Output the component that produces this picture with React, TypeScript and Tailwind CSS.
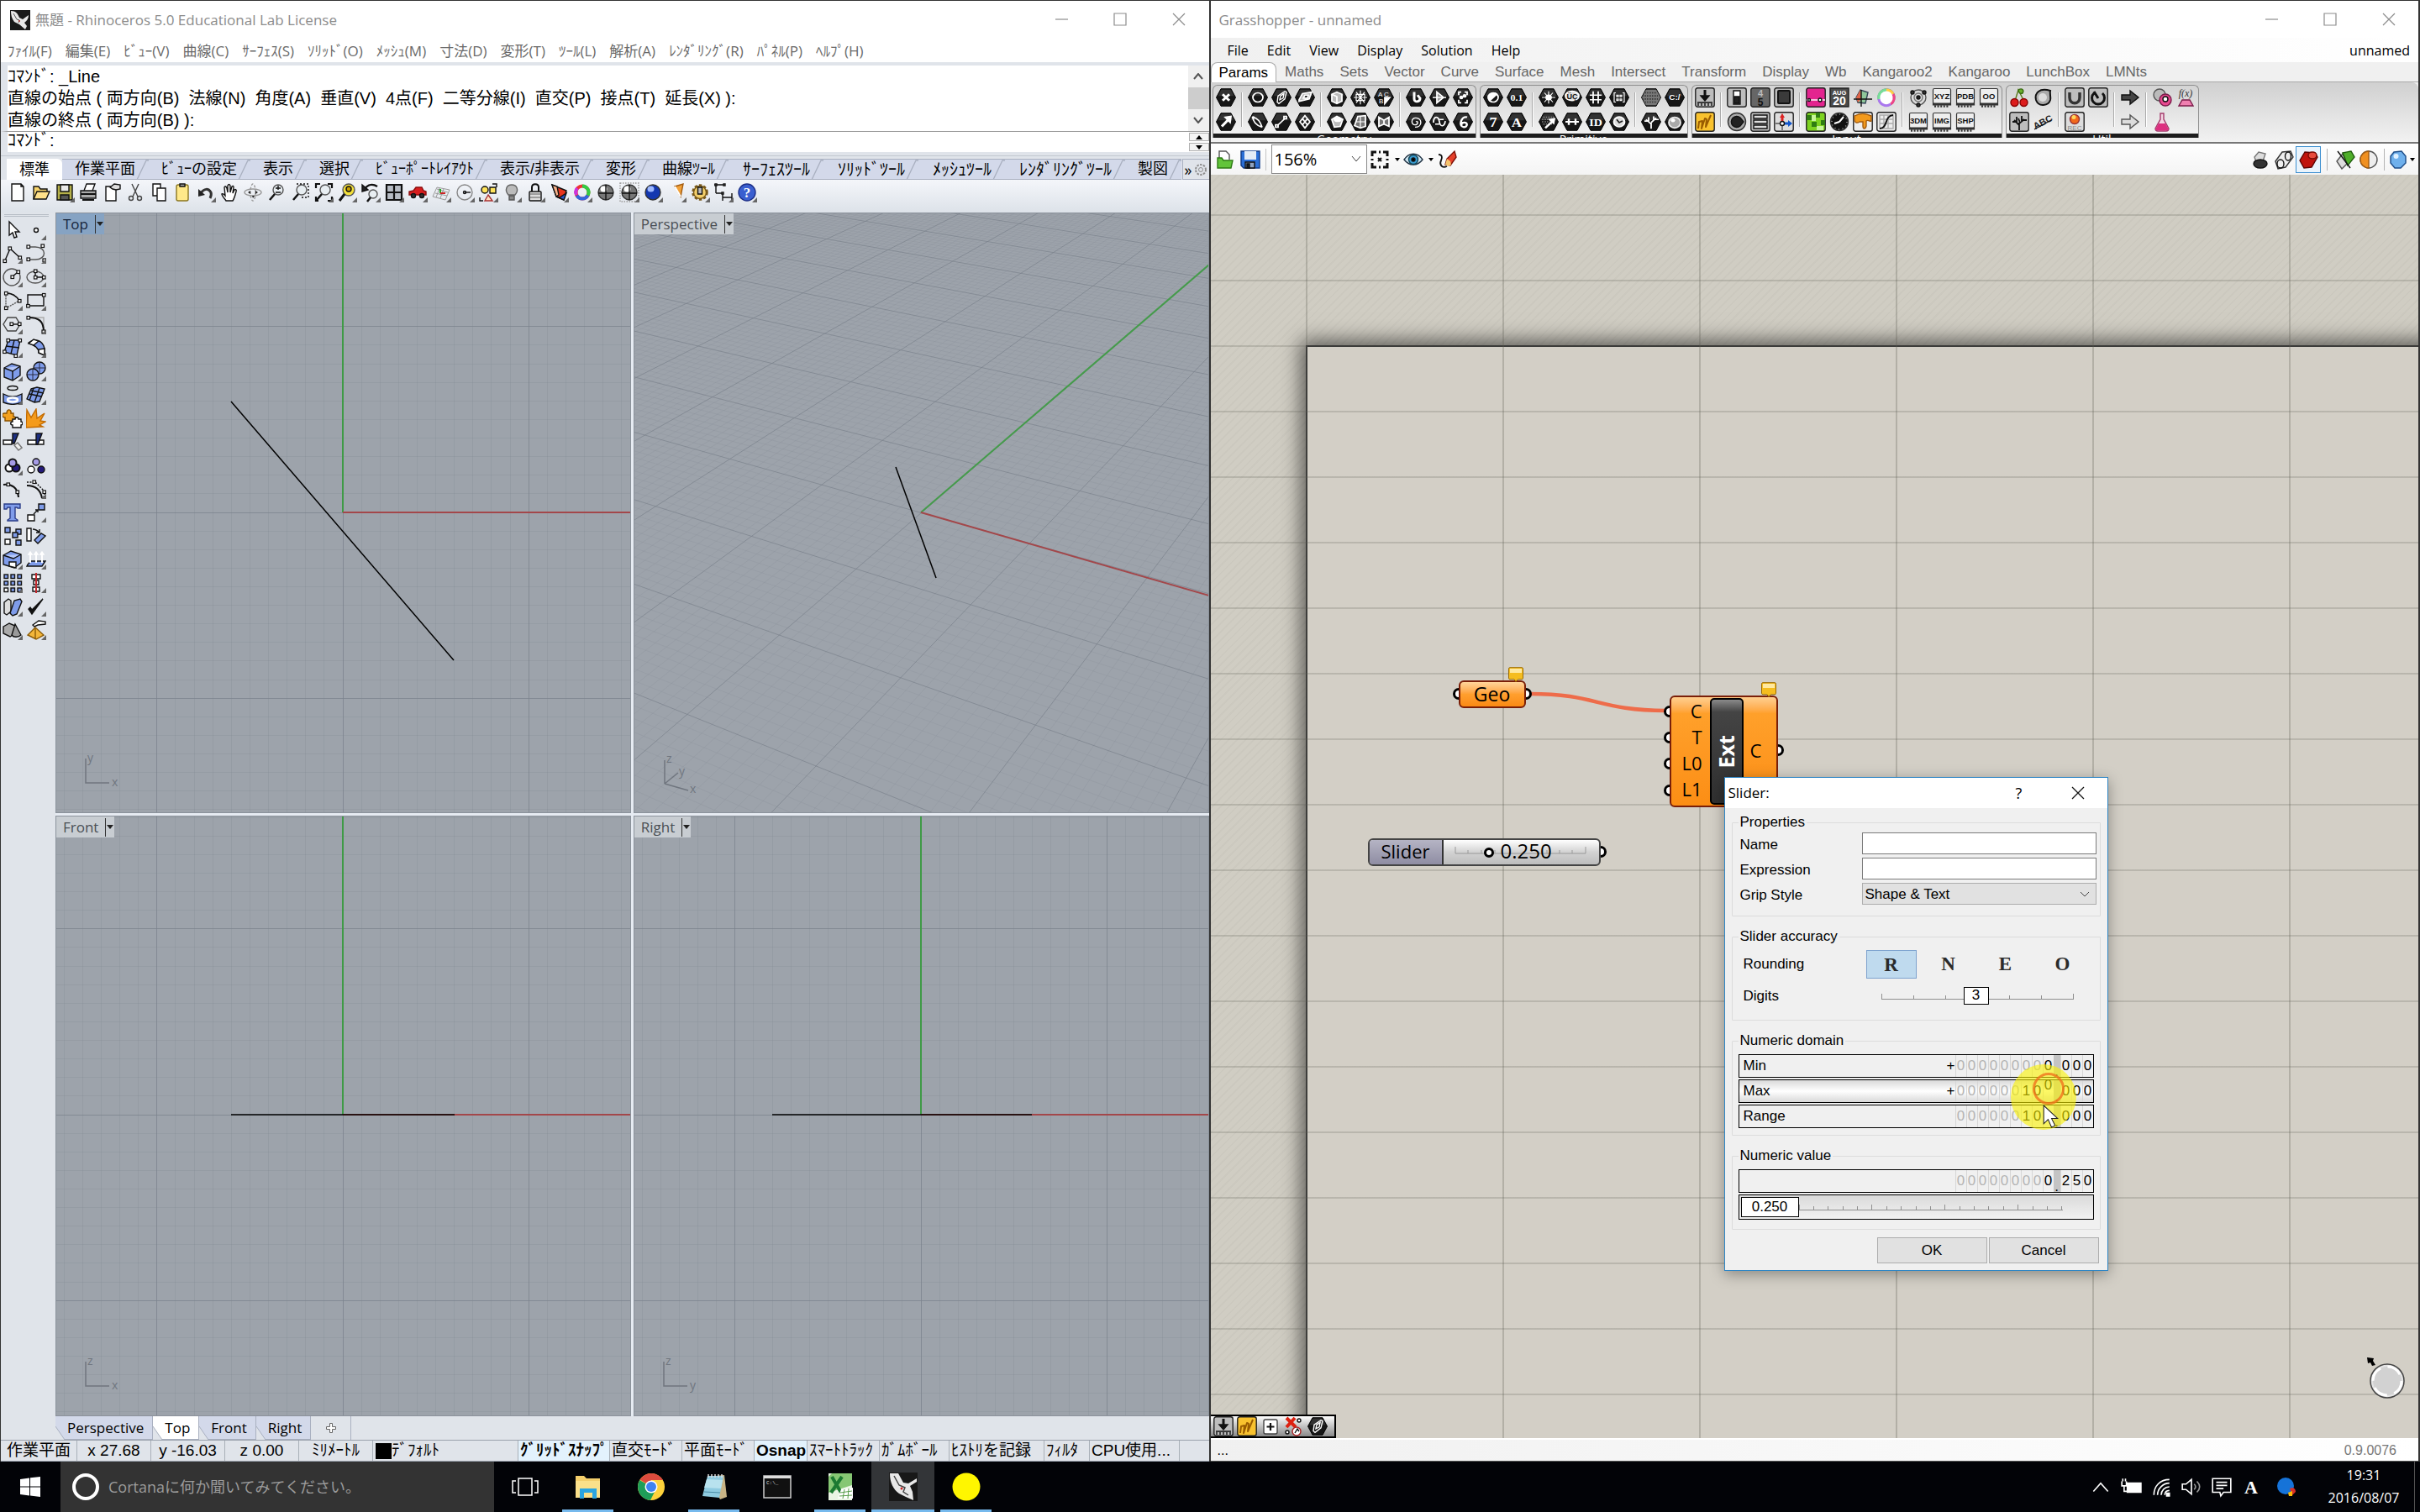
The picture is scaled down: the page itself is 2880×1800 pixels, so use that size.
import React from "react";

type Kids = { children?: React.ReactNode };

const UI = "font-['Open_Sans','Noto_Sans_CJK_JP',sans-serif]";
const GOTHIC = "font-['Liberation_Sans','Noto_Sans_CJK_JP',sans-serif]";

/* ---------- icon helpers ---------- */

function Ico({ children }: Kids) {
  return (
    <svg viewBox="0 0 24 24" className="h-6 w-6 shrink-0" fill="none" stroke="#111" strokeWidth="1.4">
      {children}
    </svg>
  );
}

function Hex({ children }: Kids) {
  return (
    <svg viewBox="0 0 24 24" className="h-[22px] w-6 shrink-0" preserveAspectRatio="none" fill="none" stroke="#fff" strokeWidth="1.8">
      <path d="M6 .8h12l5.500 11.200L18 23.200H6L.5 12z" fill="#161616" stroke="#000" strokeWidth="1" />
      <path d="M6.500 1.800h11l4 8.200H2.500z" fill="#4a4a4a" stroke="none" opacity=".55" />
      {children}
    </svg>
  );
}

function Tile({ children, fill = "#bdbdbd" }: Kids & { fill?: string }) {
  return (
    <svg viewBox="0 0 24 24" className="h-6 w-6 shrink-0" fill="none" stroke="#111" strokeWidth="1.4">
      <rect x=".8" y=".8" width="22.400" height="22.400" rx="2.500" fill={fill} stroke="#222" />
      {children}
    </svg>
  );
}

function Chip({ label }: { label: string }) {
  return (
    <svg viewBox="0 0 24 24" className="h-6 w-6 shrink-0" fill="none" stroke="#333" strokeWidth="1.2">
      <rect x="1.500" y="1.500" width="21" height="18" rx="1.500" fill="#eee" />
      <path d="M1.500 19h21v2h-21z" fill="#333" />
      <path d="M3 22.500h18" stroke="#333" strokeWidth="2.500" strokeDasharray="2 1.600" />
      <text x="12" y="14" textAnchor="middle" fontSize="9.500" fontFamily="Liberation Sans" fontWeight="700" fill="#111" stroke="none">{label}</text>
    </svg>
  );
}

function HexText({ t, size = 13, serif = false }: { t: string; size?: number; serif?: boolean }) {
  return (
    <Hex>
      <text x="12" y={12 + size * 0.37} textAnchor="middle" fontSize={size} fontWeight="700" fill="#fff" stroke="none" fontFamily={serif ? "Liberation Serif" : "Liberation Sans"}>{t}</text>
    </Hex>
  );
}

const corner = <path d="M24 18v6h-6z" fill="#666" stroke="none" />;
const BLUE = "#7f9cea";

/* ---------- Rhino main toolbar ---------- */

const magnifier = (
  <>
    <circle cx="14" cy="9" r="6" fill="#e8eef2" stroke="#555" />
    <path d="M10 14 4 21" strokeWidth="2.500" />
  </>
);

const ball = (a: string, b: string) => (
  <>
    <circle cx="12" cy="12" r="9" fill={a} stroke="#333" />
    <ellipse cx="9.500" cy="8" rx="4" ry="3.500" fill={b} stroke="none" />
  </>
);

const mainIcons: [string, React.ReactNode, boolean][] = [
  ["New", <path d="M5 2h11l3 3v17H5zM16 2v3h3" fill="#fff" />, false],
  ["Open", <><path d="M3 20V5h6l2 3h8v3" fill="#f6d36b" /><path d="m3 20 4-9h15l-4 9z" fill="#ffe08a" /></>, false],
  ["Save", <><path d="M3 3h18v18H3z" fill="#b5b04a" /><path d="M7 3h10v8H7z" fill="#e9e9e9" /><path d="M7 15h10v6H7z" fill="#555" /></>, true],
  ["Print", <><path d="m7 10 3-8h10l-3 8" fill="#fff" /><path d="M3 10h18v9H3z" fill="#aaa" /><path d="M3 14h18M5 21h14" strokeWidth="2" /></>, false],
  ["Properties", <><path d="M5 5h12v17H5z" fill="#fff" /><path d="m10 6 5-4 7 1v5l-5 1-4-1z" fill="#ddd" /></>, false],
  ["Cut", <><path d="M8 2 15 17M16 2 9 17" stroke="#444" /><circle cx="7" cy="19" r="2.500" stroke="#444" /><circle cx="17" cy="19" r="2.500" stroke="#444" /></>, false],
  ["Copy", <><path d="M5 2h9v14H5z" fill="#fff" /><path d="M10 7h10v15H10z" fill="#fff" /></>, false],
  ["Paste", <><rect x="5" y="3" width="14" height="19" rx="2" fill="#ffe98a" stroke="#8a7620" /><path d="M9 2h6v3H9z" fill="#aaa" /></>, false],
  ["Undo", <><path d="M6 13c4-6 9-6 12-1 1 3 0 5-1 7" stroke="#333" strokeWidth="3" /><path d="M3 8v9l8-2z" fill="#222" stroke="none" /></>, true],
  ["Pan", <path d="M8 22c-2-3-5-6-5-8 2-1 3 1 4 2L6 6c1-2 2-1 3 1l1 5V4c1-2 2-2 3 0v8l2-7c1-1 2-1 2 1l-1 7 2-4c1-1 3 0 2 2-1 4-2 8-4 11z" fill="#fff" />, false],
  ["Rotate view", <><ellipse cx="12" cy="12" rx="10" ry="4" stroke="#999" /><ellipse cx="12" cy="12" rx="3" ry="10" stroke="#999" strokeDasharray="3 2" /><path d="m9 10-3 2 3 2zM15 10l3 2-3 2zM11 16l1 3 2-3z" fill="#222" stroke="none" /></>, false],
  ["Zoom dynamic", <>{magnifier}<path d="M11 7h6M14 4v5M11 12h6" /></>, false],
  ["Zoom window", <>{magnifier}<path d="M8 2h14v16h-8" strokeDasharray="2 2" /></>, false],
  ["Zoom extents", <>{magnifier}<path d="M3 7V2h5M17 2h5v5M22 17v5h-5M3 17v5h3" strokeWidth="2.200" /></>, true],
  ["Zoom selected", <><circle cx="14" cy="9" r="7" fill="#f3e03a" stroke="#555" /><circle cx="14" cy="8" r="3" fill="#c9a000" /><path d="M9 14 3 22" strokeWidth="3" /></>, true],
  ["Undo view", <><circle cx="15" cy="14" r="5" fill="#e8eef2" stroke="#555" /><path d="m12 18-4 5" strokeWidth="2.500" /><path d="M5 8c4-6 10-6 15-3" strokeWidth="2.500" /><path d="M2 3v8l7-2z" fill="#222" /></>, true],
  ["Four views", <><path d="M3 3h18v18H3z" fill="#b7bcc4" strokeWidth="2.200" /><path d="M12 3v18M3 12h18" strokeWidth="2.200" /></>, true],
  ["Named view", <><path d="M2 15v-4l5-1 3-4h7l2 4 3 1v4z" fill="#d81e1e" stroke="#8c0d0d" /><circle cx="7" cy="16" r="2.500" fill="#333" /><circle cx="17" cy="16" r="2.500" fill="#333" /></>, true],
  ["Construction plane", <><path d="m2 17 5-11 15 3-5 12zM5 13l14 3M7 8l13 4M10 7 6 18M15 8l-4 11" stroke="#999" strokeWidth="1" /><path d="M11 13V8" stroke="#2a2" strokeWidth="2" /><path d="M11 13h6" stroke="#c22" strokeWidth="2" /></>, true],
  ["Set view", <><circle cx="12" cy="12" r="9" stroke="#888" /><path d="M12 12h7" /><circle cx="12" cy="12" r="1.500" /></>, true],
  ["Select", <><circle cx="8" cy="9" r="4" fill="#ffe45c" /><path d="M14 6h7v7h-7z" fill="#ffe45c" /><path d="m12 15 5 7H8z" fill="#ffe0c0" stroke="#a33" /><path d="M17 2h5v4M2 18v4h4" /></>, true],
  ["Hide", <><path d="M8 15c-5-6-2-12 4-12s9 6 4 12z" fill="#bbb" stroke="#666" /><path d="M9 16h6v5H9z" fill="#888" stroke="#555" /></>, true],
  ["Lock", <><path d="M8 11V6c0-5 8-5 8 0v5" strokeWidth="2" /><rect x="5" y="11" width="14" height="11" rx="1" fill="#ddd" /><path d="M6 14h12M6 18h12" stroke="#888" /></>, true],
  ["Layers", <><path d="m4 3 17 7-3 11-9-4z" fill="#e8341c" /><path d="m4 3 5 14 3-2-2-10z" fill="#f7b28a" /><path d="m9 17 9 4 3-8-8 5z" fill="#2b57c8" /></>, true],
  ["Colour", <><circle cx="12" cy="12" r="7.500" stroke="#e33" strokeWidth="4" /><path d="M12 4.500a7.500 7.500 0 0 1 6.500 11.300" stroke="#3c4" strokeWidth="4" /><path d="M18.500 15.800a7.500 7.500 0 0 1-13 0" stroke="#36d" strokeWidth="4" /><path d="M5 15a7.500 7.500 0 0 1 1-8" stroke="#c3d" strokeWidth="4" /></>, true],
  ["Shade", <>{ball("#777", "#fff")}<path d="M12 3v18M3 13h18" /></>, false],
  ["Wireframe", <><path d="M1 1h22v22H1z" stroke="#999" strokeDasharray="1.500 1.500" />{ball("#777", "#fff")}<path d="M12 3v18M3 13h18" /></>, true],
  ["Render", ball("#1438b0", "#9db8ff"), true],
  ["Spotlight", <><path d="m10 5 10-3-3 15z" fill="#f2a23a" stroke="#a35c10" /><path d="m10 5 7 12" stroke="#fff" strokeWidth="2" /></>, true],
  ["Options", <><circle cx="12" cy="12" r="8" fill="#f3cf6a" stroke="#77581a" strokeWidth="3.500" strokeDasharray="3.200 2" /><circle cx="12" cy="12" r="7.500" fill="#f3cf6a" stroke="#77581a" /><path d="M9.500 6h5v8h-5z" fill="#bbb" /></>, true],
  ["Dimension", <><path d="M3 2v11M1 3h12M3 13h8v9M11 18h11M22 13v9" /><path d="M2 2h2v2H2zM12 2h2v2h-2zM10 12h2v2h-2z" fill="#fff" /></>, true],
  ["Help", <><circle cx="12" cy="12" r="10" fill="#3a5fd0" stroke="#1c2f88" /><text x="12" y="18" textAnchor="middle" fontSize="17" fontWeight="700" fontFamily="Liberation Serif" fill="#fff" stroke="none">?</text></>, true],
];

/* ---------- Rhino side toolbar ---------- */

const sq = (x: number, y: number, f = "#fff") => <rect x={x} y={y} width="3.500" height="3.500" fill={f} strokeWidth="1.200" />;

const sideIcons: [string, React.ReactNode, boolean][] = [
  ["Select", <path d="M8 2v16l4-3 2 6 3-1-2-6h5z" fill="#fff" />, false],
  ["Point", <circle cx="12" cy="12" r="2.500" fill="#fff" />, true],
  ["Polyline", <><path d="m3 20 6-14 12 11" />{sq(7, 4)}{sq(1, 19)}{sq(19, 15)}</>, true],
  ["Curve", <><path d="M5 4h6c14 0 14 15 0 15H5" stroke="#555" />{sq(1, 2)}{sq(1, 17)}{sq(18, 1)}{sq(20, 18)}</>, true],
  ["Circle", <><circle cx="11" cy="12" r="10" stroke="#555" /><path d="m11 12 7-6" />{sq(10, 10)}{sq(17, 4)}</>, true],
  ["Ellipse", <><ellipse cx="11" cy="12" rx="10" ry="7" stroke="#555" /><path d="M11 5v7h10" />{sq(9.5, 3)}{sq(9.5, 10.5)}{sq(19.5, 10.5)}</>, true],
  ["Arc", <><path d="M4 3c8 0 13 4 16 9L4 21z" stroke="#555" strokeDasharray="2 1" /><path d="M4 3c8 0 13 4 16 9" />{sq(2.5, 1.5)}{sq(18.5, 10.5)}{sq(2.5, 19)}</>, true],
  ["Rectangle", <><path d="M2 5h19v13H2z" />{sq(0.7, 16.5)}{sq(19.5, 3.5)}</>, true],
  ["Polygon", <><path d="M6 4h10l5 8-5 8H6l-5-8z" stroke="#444" /><path d="M11 12h9" />{sq(9, 10)}{sq(18.5, 10)}</>, true],
  ["Fillet", <><path d="M3 4h18v17" stroke="#aaa" /><path d="M3 4c12 0 18 4 18 17" strokeWidth="2" />{sq(1, 2.5)}{sq(19, 19)}</>, true],
  ["Surface", <><path d="M7 3h14l-4 18-15-4z" fill={BLUE} /><path d="m4 10 16 2M14 3l-4 16" />{sq(5, 1.5)}{sq(19, 1.5)}{sq(0.7, 15)}{sq(14, 20)}</>, true],
  ["Sweep", <><path d="M3 6c7-6 17-3 19 7v8l-7-3c0-6-4-8-12-12z" fill={BLUE} /><path d="m3 7 6-5 6 2-6 5z" fill="#fff" /><path d="m15 14 7-1v8l-7-3z" fill="#fff" /></>, true],
  ["Box", <><path d="m2 8 9-5 10 3v11l-9 6-10-4z" fill={BLUE} /><path d="m2 8 10 4 9-6" fill="#b5c8fa" /><path d="M12 12v11" /></>, true],
  ["Boolean", <><circle cx="16" cy="8" r="7" fill={BLUE} /><circle cx="8" cy="16" r="7" fill={BLUE} /><path d="M9 8h14M1 16h14M8 9v14M16 1v14" stroke="#223" strokeWidth=".9" /></>, true],
  ["Project", <><ellipse cx="12" cy="4" rx="6" ry="2.500" /><path d="M1 11c7 4 15 4 22 0v10c-7 3-15 3-22 0z" fill={BLUE} /><ellipse cx="12" cy="18" rx="6" ry="2.500" stroke="#fff" strokeWidth="2.500" /></>, true],
  ["Mesh", <><path d="m6 5 7-2 9 2-6 15-6 1-9-4z" fill={BLUE} /><path d="m4 11 14 3M9 4 4 19M16 4l-6 17M6 7l15 3" /></>, true],
  ["Join", <><path d="M2 6h3c0-6 6-5 5 0h3v4c5 0 4 5 0 5H3v-4c-4 0-4-5-1-5z" fill="#f3a120" stroke="#8a5200" /><path d="M12 13h3c0-3 4-3 4 0h3v3c3 0 2 4 0 4v3H12v-3c-3 0-3-4 0-4z" fill="#fff" /></>, false],
  ["Explode", <path d="m1 2 5 9 6-10 1 11 9-6-5 9 6 1-7 4 4 2-20 1z" fill="#f49b1c" stroke="#c26a00" />, false],
  ["Trim", <><path d="M1 10h10v5H1z" fill="#fff" /><path d="M12 2h7l-5 12h-2z" fill="#1d2f80" /><path d="m14 16 4-3 5 6-4 3z" fill="#eee" stroke="#777" /></>, false],
  ["Split", <><path d="M2 10h19v5H2z" fill="#fff" /><path d="M12 2h7l-5 13h-2z" fill="#1d2f80" /></>, false],
  ["Group", <><circle cx="8" cy="15" r="4.500" fill="#fff" strokeWidth="2" /><circle cx="16" cy="15" r="4.500" fill="#241a7a" strokeWidth="2" /><circle cx="12" cy="9" r="4.500" fill="#a59be6" strokeWidth="2" /></>, true],
  ["Ungroup", <><circle cx="6" cy="17" r="4" fill="#fff" /><circle cx="18" cy="17" r="4" fill="#241a7a" /><circle cx="12" cy="8" r="4" fill="#a59be6" /></>, false],
  ["Edit points", <><path d="M1 7c10-1 17 3 18 15" strokeWidth="2" />{sq(5, 5)}{sq(16, 14)}</>, false],
  ["Control points", <><path d="M1 8c10 0 16 4 18 15" strokeWidth="2" /><path d="M1 4h10l12 12-2 6" strokeDasharray="2 1.500" />{sq(8, 2)}{sq(20, 14)}</>, true],
  ["Text", <path d="M2 2h19v5h-3l-1-1h-2v13l3 2v1H6v-1l3-2V6H6L5 8H2z" fill={BLUE} stroke="#2a3c88" />, false],
  ["Move", <><path d="M2 15h8v7H2z" fill="#fff" /><path d="M15 2h7v7h-7z" fill={BLUE} /><path d="m9 14 5-5M11 9h3v3" /></>, true],
  ["Copy", <><path d="M3 2h6v6H3z" fill={BLUE} /><path d="M3 16h6v6H3z" fill="#fff" /><path d="M16 4h6v6h-6z" fill={BLUE} /><path d="M12 8h6v6h-6zM16 17h6v6h-6z" fill={BLUE} /></>, false],
  ["Rotate", <><path d="M1 3h5v15H1z" fill="#fff" /><path d="m10 17 8-8 5 3-9 9z" fill={BLUE} /><path d="M8 4c4 0 6 2 8 4M16 4v4h-4" /></>, false],
  ["Solid edit", <><path d="m1 7 9-5 12 4v10l-8 6-13-4z" fill={BLUE} /><path d="m1 7 12 4 9-5" fill="#b5c8fa" /><path d="M8 15h8v7l-8-2z" fill="#fff" /></>, true],
  ["Extrude", <><path d="m2 18 4-4h17l-4 6H1z" fill={BLUE} /><path d="M5 16V5M12 16V5M19 16V5" stroke="#fff" strokeWidth="2" /><path d="m3 6 2-3 2 3zM10 6l2-3 2 3zM17 6l2-3 2 3z" fill="#fff" stroke="#fff" /></>, true],
  ["Array", <>{[2, 10, 18].map((x) => [2, 10, 18].map((y) => <rect key={`${x}-${y}`} x={x} y={y} width="4.500" height="4.500" fill={x === 2 && y === 18 ? "#fff" : BLUE} />))}</>, true],
  ["Align", <><path d="M7 2h10v5H7zM9 9h6v5H9zM8 17h8v5H8z" fill="#fff" /><path d="M12 0v24" stroke="#c0282d" strokeWidth="2" /></>, true],
  ["Symmetry", <><path d="m2 7 5-4 3 2v13l-5 4-3-2z" fill="#ddd" /><path d="m9 20 5-15 7-2 2 3-6 15-5 2z" fill={BLUE} /></>, true],
  ["Check", <path d="m3 15 4 6L20 3 7 16l-2-3z" fill="#111" />, true],
  ["Solids", <><path d="m1 8 7-4 7 3v9l-6 4-8-4z" fill="#aaa" /><path d="m15 5 7 13c-3 3-9 3-11 0z" fill="#999" /></>, true],
  ["Render tools", <><path d="m11 9 10 9-9 5-10-5z" fill="#f3b63a" stroke="#8a5b08" /><path d="M11 9v14" stroke="#8a5b08" /><path d="m8 6 7-5 8 1v3l-9 1-4 2z" fill="#fff" /></>, true],
];

/* ---------- Grasshopper ribbon ---------- */

const downArrowTile = <Tile><path d="M12 3v9" strokeWidth="3" /><path d="m7 10 5 6 5-6z" fill="#111" /><path d="M3 18h18M4 19v3M8 19v3M12 19v3M16 19v3M20 19v3" /></Tile>;
const sketchTile = <Tile fill="#f9c22e"><path d="m4 20 1-8 4-1-1 9 4-12 2 1-1 9 6-14" stroke="#9a5c00" strokeWidth="2" strokeLinejoin="round" /></Tile>;
const eyeHex = <Hex><path d="m7 18 1-8 8-6 2 1-2 9-7 6zM10 15l1-5 4-3-1 6z" strokeWidth="1.400" /></Hex>;

const ribbon: { title: string; groups: React.ReactNode[][] }[] = [
  {
    title: "Geometry",
    groups: [
      [<Hex><path d="m8 8 8 8M16 8l-8 8" strokeWidth="3" /></Hex>, <Hex><path d="m7 18 8-9" strokeWidth="3" /><path d="m11 6 7-1-1 8z" fill="#fff" /></Hex>],
      [
        <Hex><circle cx="12" cy="12" r="6" /></Hex>,
        <Hex><path d="M6 6c5 1 9 6 11 13M6 6c0 5 4 11 11 13" /><circle cx="6.500" cy="6.500" r="1" /></Hex>,
        eyeHex,
        <Hex><path d="m6 18 12-12" /><path d="M5 16h3v3H5zM15 5h3v3h-3z" fill="#000" /></Hex>,
        <Hex><path d="m5 15 4-8 11-2-3 9-12 3z" fill="#bbb" /><path d="m10 13 2-4h4l-1 4z" fill="#222" /></Hex>,
        <Hex><path d="m12 4 6 8-6 8-6-8zM9 8l6 8M15 8l-6 8" /></Hex>,
      ],
      [
        <Hex><path d="m6 8 6-3 6 3v9l-6 3-6-3z" fill="#bbb" /><path d="m6 8 6 3v9" /></Hex>,
        <Hex><path d="m6 9 6-4 7 4-3 9-7 1z" fill="#bbb" /><ellipse cx="13" cy="9" rx="4" ry="2.500" fill="#fff" /></Hex>,
        <Hex><path d="M12 3v18M4 12h16M7 5l10 14M17 5 7 19M7 8h10v8H7z" strokeWidth="1.200" /></Hex>,
        <Hex><path d="m9 5 9-1v14l-6 2-7-3z" fill="#777" /><path d="M12 5v14M7 12h11" strokeWidth="1.200" /></Hex>,
        <Hex><text x="5" y="11" fontSize="8" fill="#fff" stroke="none" fontFamily="Liberation Sans">A C</text><text x="6" y="20" fontSize="8" fill="#fff" stroke="none" fontFamily="Liberation Sans">B</text><path d="M13 12h6l-6 8z" fill="#fff" /></Hex>,
        <Hex><path d="M6 6v12l6-3 6 3V6l-6 4zM12 10v5" fill="#777" /></Hex>,
      ],
      [
        <Hex><path d="M10 5v9c0 5 7 4 7-1l-3-4" strokeWidth="3" /></Hex>,
        <Hex><path d="M12 12c3-2 3 4-1 4-5 0-5-9 1-9 8 0 8 12-1 12" strokeWidth="1.400" /></Hex>,
        <Hex><path d="M4 12h16M9 5v14l8-7z" fill="#999" /></Hex>,
        <Hex><path d="M5 13c0-9 6-9 7-1 1 7 6 7 7-1M12 9h5M7 15h5" /></Hex>,
        <Hex><path d="M7 9V5h3M17 9V5h-3M7 15v4h3M17 15v4h-3" /><circle cx="10" cy="12" r="1.500" fill="#fff" /><circle cx="14" cy="10" r="1.500" fill="#fff" /></Hex>,
        <Hex><path d="M17 6c-7-2-11 12-4 13 5 0 5-7 0-6-2 0-3 2-3 4" strokeWidth="2.400" /></Hex>,
      ],
    ],
  },
  {
    title: "Primitive",
    groups: [
      [<Hex><circle cx="12" cy="12" r="6" /><path d="M7.800 16.200 16.200 7.800A6 6 0 0 0 7.800 16.200z" fill="#fff" /></Hex>, <HexText t="7" size={18} serif />, <HexText t="0.1" size={12} serif />, <HexText t="A" size={17} serif />],
      [
        <Hex><path d="M12 4v16M4 12h16M7 6l10 12M17 6 7 18" strokeWidth="1.200" /><circle cx="12" cy="12" r="3" fill="#fff" /></Hex>,
        <Hex><path d="M5 6h14M4 9h15M4 12h14M5 15h11" stroke="#888" strokeDasharray="1 1" /><path d="m8 20 9-9" strokeWidth="2.500" /><path d="m13 9 6-1-1 6z" fill="#fff" /></Hex>,
        <Hex><ellipse cx="12" cy="10" rx="8" ry="6" fill="#ddd" /><text x="12" y="14" textAnchor="middle" fontSize="9" fontWeight="700" fill="#111" stroke="none" fontFamily="Liberation Sans">ÜÇ</text></Hex>,
        <Hex><path d="M4 12h16M8 8v8M16 8v8" strokeWidth="2.400" /></Hex>,
        <Hex><path d="M9 4v16M15 4v16M5 9h14M5 15h14" /></Hex>,
        <HexText t="ID" size={14} serif />,
        <Hex><path d="M8 6H6v12h2M16 6h2v12h-2M9 9h2v2H9zM13 9h2v2h-2zM9 14h2v2H9zM13 14h2v2h-2z" strokeWidth="1.200" /></Hex>,
        <Hex><circle cx="12" cy="12" r="6.500" fill="#ddd" /><path d="m9 9 3 4 4-2" stroke="#222" /></Hex>,
      ],
      [
        <Hex><path d="M6 2h12l5 10-5 10H6L1 12z" fill="#777" stroke="none" /><path d="M5 6h14M3 10h18M3 14h18M5 18h14" stroke="#333" strokeDasharray="1 1" /></Hex>,
        <Hex><path d="M12 21v-8M12 15 6 9M12 13l6-6M9 12V6M15 10V5M8 11H4M16 9h5" /></Hex>,
        <HexText t="C:/" size={10} />,
        <Hex><circle cx="12" cy="13" r="7" fill="#aaa" stroke="#eee" /><circle cx="10" cy="10" r="2.500" fill="#fff" stroke="none" /></Hex>,
      ],
    ],
  },
  {
    title: "Input",
    groups: [
      [downArrowTile, sketchTile],
      [
        <Tile><path d="M8 4h8v16H8z" fill="#fff" /><path d="M9 11h6v8H9z" fill="#222" /></Tile>,
        <Ico><circle cx="12" cy="12" r="10.500" fill="#aaa" stroke="#333" /><path d="m20 12-4-5a6.500 6.500 0 1 0 0 10z" fill="#222" /></Ico>,
        <Tile fill="#666"><text x="12" y="11" textAnchor="middle" fontSize="11" fontWeight="700" fill="#bbb" stroke="none" fontFamily="Liberation Sans">4</text><text x="12" y="22" textAnchor="middle" fontSize="12" fontWeight="700" fill="#111" stroke="none" fontFamily="Liberation Sans">5</text></Tile>,
        <Tile><path d="M4 4h16v4H4zM4 10h16v4H4zM4 16h16v4H4z" fill="#ddd" /></Tile>,
        <Tile><rect x="5" y="4" width="14" height="15" rx="1" fill="#3a3a3a" strokeWidth="2" /></Tile>,
        <Tile fill="#ddd"><path d="M10 11V3M2 14h8v8" stroke="#555" /><path d="M10 12V6" stroke="#d22" strokeWidth="3" /><path d="m7 7 3-5 3 5z" fill="#d22" stroke="none" /><path d="M12 14h6" stroke="#15c" strokeWidth="3" /><path d="m17 10 5 4-5 4z" fill="#15c" stroke="none" /><circle cx="10" cy="14" r="2.500" fill="#fff" /></Tile>,
      ],
      [
        <Tile fill="#e3248f"><path d="M1 15h22" stroke="#fff" /><circle cx="4" cy="15" r="1.500" fill="#fff" /><circle cx="17" cy="15" r="2" fill="#fff" /></Tile>,
        <Tile fill="#7ed321"><path d="M1 4h6v6H1zM12 1h5v6h-5zM7 12h6v6H7zM18 10h5v6h-5z" fill="#2f7d12" stroke="none" /><path d="M7 4h5v7H7zM13 17h8v5h-8z" fill="#c7f59a" stroke="none" /></Tile>,
        <Ico><path d="M1 1h22v22H1z" fill="#4a4a4a" stroke="#222" /><text x="12" y="8.500" textAnchor="middle" fontSize="7.500" fontWeight="700" fill="#fff" stroke="none" fontFamily="Liberation Sans">AUG</text><text x="12" y="21" textAnchor="middle" fontSize="14" fontWeight="700" fill="#fff" stroke="none" fontFamily="Liberation Sans">20</text></Ico>,
        <Ico><circle cx="12" cy="12" r="10.500" fill="#111" stroke="#333" /><path d="M12 12 17 6M12 12l-6 2" stroke="#fff" strokeWidth="2" /><circle cx="12" cy="12" r="9" stroke="#aaa" strokeDasharray="1 3.700" /></Ico>,
        <Ico><path d="m4 12 5-9 9 3-3 13-9-1z" fill="#8fc79a" stroke="#345" /><path d="m9 3 1 11-4 4-2-6z" fill="#e0654a" stroke="none" /><path d="M1 14h22M10 3v20" /></Ico>,
        <Tile fill="#eee"><path d="M2 5c7-4 14-3 20 0v6c-3 1-4-2-6 0v6c-1 4-4 4-4 0v-5H8c-3 2-6 1-6-2z" fill="#f39a1c" stroke="#a35c10" /></Tile>,
        <Ico><circle cx="12" cy="12" r="10" fill="#fff" stroke="#888" /><path d="M12 3a9 9 0 0 1 8 5" stroke="#fc4" strokeWidth="3" /><path d="M20 8a9 9 0 0 1-3 12" stroke="#e48" strokeWidth="3" /><path d="M17 20A9 9 0 0 1 3 14" stroke="#a7e" strokeWidth="3" /><path d="M3 14A9 9 0 0 1 12 3" stroke="#7d9" strokeWidth="3" /></Ico>,
        <Tile fill="#eee"><path d="M4 4h16v16H4zM4 9h16M4 14h16M9 4v16M14 4v16" stroke="#aaa" /><path d="M4 20c10 0 5-15 16-16" strokeWidth="2" /></Tile>,
      ],
      [
        <Ico><circle cx="12" cy="12" r="9" stroke="#555" /><circle cx="12" cy="12" r="5" stroke="#777" /><circle cx="12" cy="12" r="2" fill="#222" /><circle cx="5" cy="6" r="2" fill="#333" /><circle cx="19" cy="6" r="2" fill="#333" /><circle cx="12" cy="21" r="2" fill="#333" /></Ico>,
        <Chip label="3DM" />,
        <Chip label="XYZ" />,
        <Chip label="IMG" />,
        <Chip label="PDB" />,
        <Chip label="SHP" />,
        <Chip label="OO" />,
      ],
    ],
  },
  {
    title: "Util",
    groups: [
      [
        <Ico><path d="M7 16 11 3l6 12" stroke="#5a7a1c" /><path d="M11 3c5-3 7 1 5 4-3 1-5-1-5-4z" fill="#6ab02c" stroke="#386a10" /><circle cx="6.500" cy="18" r="4.500" fill="#dc1c1c" stroke="#800" /><circle cx="17.500" cy="18" r="4.500" fill="#dc1c1c" stroke="#800" /></Ico>,
        <Tile><path d="M12 22v-9M12 16 6 10M12 14l6-5M9 13V6M15 12V5M8 12H4M16 10h5M11 8l2 5" strokeWidth="1.800" /></Tile>,
        <Ico><path d="M21 4C8 0 2 7 4 15c3 9 15 7 17 0 1-4-1-7 0-11z" fill="#aaa" strokeWidth="2" /><circle cx="12" cy="12" r="5" fill="#ddd" stroke="none" /></Ico>,
        <Ico><text x="12" y="16" textAnchor="middle" fontSize="11" fontWeight="700" fill="#222" stroke="none" fontFamily="Liberation Sans" transform="rotate(-28 12 12)">ABC</text><path d="m2 21 20-11" /></Ico>,
      ],
      [
        <Tile><path d="M6 6v6c0 9 12 9 12 0V6" stroke="#333" strokeWidth="3.500" /></Tile>,
        <Tile fill="#ddd"><circle cx="12" cy="9" r="5.500" fill="#f2691c" stroke="#933" /><circle cx="11" cy="6.500" r="2.500" fill="#ffd75c" stroke="none" /><text x="12" y="22" textAnchor="middle" fontSize="8" fill="#888" stroke="none" fontFamily="Liberation Sans">REC</text></Tile>,
        <Tile><path d="M7 7a7.500 7.500 0 1 0 10 0M12 13 7 5" strokeWidth="3" /></Tile>,
        null,
      ],
      [
        <Ico><path d="M2 9h10V4l10 8-10 8v-5H2z" fill="#444" /></Ico>,
        <Ico><path d="M2 9h10V4l10 8-10 8v-5H2z" fill="#ddd" stroke="#555" /></Ico>,
      ],
      [
        <Ico><circle cx="9" cy="9" r="7" fill="#bbb" stroke="#555" /><circle cx="16" cy="15" r="7" fill="#e6488f" stroke="#7c1c4a" /><circle cx="16" cy="14" r="3" fill="#fff" /></Ico>,
        <Ico><path d="M10 2h4v7l6 11c0 2-1 3-3 3H7c-2 0-3-1-3-3l6-11z" fill="#f3d5e2" stroke="#a33a6c" /><path d="M8 14h8l4 7c-1 2-15 2-16 0z" fill="#dd2f80" stroke="none" /></Ico>,
        <Ico><text x="12" y="11" textAnchor="middle" fontSize="12" fontStyle="italic" fill="#333" stroke="none" fontFamily="Liberation Serif">f(x)</text><path d="M8 15h9l4 7H4z" fill="#f07fb0" stroke="#7c1c4a" /></Ico>,
        null,
      ],
    ],
  },
];

/* ---------- shared window parts ---------- */

function WindowButtons() {
  return (
    <div className="flex">
      {[
        ["Minimize", "M1 8h15"],
        ["Maximize", "M1 1h14v14H1z"],
        ["Close", "m1 1 14 14M15 1 1 15"],
      ].map(([n, d]) => (
        <button key={n} aria-label={n} className="flex h-11 w-[70px] items-center justify-center">
          <svg viewBox="0 0 17 17" className="h-[17px] w-[17px]" fill="none" stroke="#8c8c8c" strokeWidth="1.200"><path d={d} /></svg>
        </button>
      ))}
    </div>
  );
}

function RhinoLogo({ className }: { className: string }) {
  return (
    <svg viewBox="0 0 24 24" className={className} aria-hidden="true">
      <path d="M0 0h24v24H0z" fill="#1a1a1a" />
      <path d="M1 1c6 0 8 3 10 8l4 2 7-5c0 4-2 7-5 9l3 4-2 4-7-6-6-3C2 10 1 6 1 1z" fill="#e8e8e8" />
      <path d="m4 4 4 7 3 1-1 3" stroke="#555" fill="none" />
      <circle cx="11" cy="13" r="1" fill="#a33" />
    </svg>
  );
}

/* ---------- Rhino window ---------- */

const rhinoMenu = ["ﾌｧｲﾙ(F)", "編集(E)", "ﾋﾞｭｰ(V)", "曲線(C)", "ｻｰﾌｪｽ(S)", "ｿﾘｯﾄﾞ(O)", "ﾒｯｼｭ(M)", "寸法(D)", "変形(T)", "ﾂｰﾙ(L)", "解析(A)", "ﾚﾝﾀﾞﾘﾝｸﾞ(R)", "ﾊﾟﾈﾙ(P)", "ﾍﾙﾌﾟ(H)"];
const rhinoTabs: [string, boolean][] = [
  ["作業平面", false],
  ["ﾋﾞｭｰの設定", false],
  ["表示", false],
  ["選択", false],
  ["ﾋﾞｭｰﾎﾟｰﾄﾚｲｱｳﾄ", false],
  ["表示/非表示", false],
  ["変形", false],
  ["曲線ﾂｰﾙ", false],
  ["ｻｰﾌｪｽﾂｰﾙ", true],
  ["ｿﾘｯﾄﾞﾂｰﾙ", true],
  ["ﾒｯｼｭﾂｰﾙ", true],
  ["ﾚﾝﾀﾞﾘﾝｸﾞﾂｰﾙ", true],
  ["製図", false],
];

function range(a: number, b: number) {
  return Array.from({ length: b - a + 1 }, (_, i) => a + i);
}

function OrthoGrid({ ox, oy }: { ox: number; oy: number }) {
  const step = 22.12;
  const lines = range(-50, 50);
  return (
    <g stroke="#7b828c" shapeRendering="crispEdges">
      {lines.map((i) => (
        <line key={`v${i}`} x1={ox + i * step} x2={ox + i * step} y1="0" y2="100%" strokeOpacity={i % 10 === 0 ? 0.75 : 0.22} />
      ))}
      {lines.map((i) => (
        <line key={`h${i}`} y1={oy + i * step} y2={oy + i * step} x1="0" x2="100%" strokeOpacity={i % 10 === 0 ? 0.75 : 0.22} />
      ))}
    </g>
  );
}

/* Projects a ground-plane point (in major grid cells) to viewport pixels. */
function project(u: number, v: number): [number, number] {
  const d = 1 - 0.0422 * u + 0.0762 * v;
  const x = (787 + 247.4 * u + 222.7 * v) / d;
  const y = (783 + 42.6 * u - 74.7 * v) / d;
  return [x / 2.272 - 5, y / 2.178 - 3];
}

function PerspectiveGrid() {
  const out: React.ReactNode[] = [];
  const N = 14;
  const E = 0.12;
  for (let i = -N * 10; i <= N * 10; i++) {
    const k = i / 10;
    const op = i % 10 === 0 ? 0.7 : 0.17;
    const vMin = Math.max(-N, (E - 1 + 0.0422 * k) / 0.0762);
    const a = project(k, vMin);
    const b = project(k, N);
    out.push(<line key={`u${i}`} x1={a[0]} y1={a[1]} x2={b[0]} y2={b[1]} strokeOpacity={op} />);
    const uMax = Math.min(N, (1 + 0.0762 * k - E) / 0.0422);
    if (uMax > -N) {
      const c = project(-N, k);
      const d = project(uMax, k);
      out.push(<line key={`v${i}`} x1={c[0]} y1={c[1]} x2={d[0]} y2={d[1]} strokeOpacity={op} />);
    }
  }
  return <g stroke="#7b828c">{out}</g>;
}

function AxisMark({ up, right }: { up: string; right: string }) {
  return (
    <svg className="absolute bottom-[26px] left-[33px] h-12 w-14" fill="none" stroke="#70767f" strokeWidth="1.500">
      <path d="M2 10v29h28" />
      <text x="4" y="14" fontSize="14" fill="#70767f" stroke="none" fontFamily="Open Sans">{up}</text>
      <text x="33" y="43" fontSize="14" fill="#70767f" stroke="none" fontFamily="Open Sans">{right}</text>
    </svg>
  );
}

function Viewport({ name, active, children, mark }: Kids & { name: string; active?: boolean; mark: React.ReactNode }) {
  return (
    <section className="relative overflow-hidden border border-[#8b929b] bg-[#9da3ab]" aria-label={name}>
      <svg className="block h-full w-full" fill="none">{children}</svg>
      <button className={"absolute left-0 top-0 flex h-[25px] items-center text-[17px] " + (active ? "bg-[#86a3c3] text-[#16243a]" : "bg-[#c8cdd2] text-[#4a4f55]")}>
        <span className="px-2">{name}</span>
        <span className="flex h-[22px] w-[11px] items-center justify-center border-l border-[#333]">
          <svg viewBox="0 0 8 5" className="h-[5px] w-2"><path d="M0 0h8L4 5z" fill="#222" /></svg>
        </span>
      </button>
      {mark}
    </section>
  );
}

const viewTabs = ["Perspective", "Top", "Front", "Right"];

const statusCells: [string, string][] = [
  ["作業平面", "w-[91px]"],
  ["x 27.68", "w-[88px]"],
  ["y -16.03", "w-[88px]"],
  ["z 0.00", "w-[88px]"],
  ["ﾐﾘﾒｰﾄﾙ", "w-[88px]"],
];
const statusModes: [string, string, boolean][] = [
  ["ｸﾞﾘｯﾄﾞｽﾅｯﾌﾟ", "w-[109px]", true],
  ["直交ﾓｰﾄﾞ", "w-[86px]", false],
  ["平面ﾓｰﾄﾞ", "w-[86px]", false],
  ["Osnap", "w-[63px]", true],
  ["ｽﾏｰﾄﾄﾗｯｸ", "w-[86px]", false],
  ["ｶﾞﾑﾎﾞｰﾙ", "w-[83px]", false],
  ["ﾋｽﾄﾘを記録", "w-[113px]", false],
  ["ﾌｨﾙﾀ", "w-[54px]", false],
  ["CPU使用...", "w-[107px]", false],
];

function RhinoWindow() {
  return (
    <div className={"flex min-w-0 flex-1 flex-col border-l border-t border-[#333] bg-[#e0e4ea] " + UI}>
      <header className="flex h-[46px] items-start justify-between bg-white">
        <h1 className="flex h-[46px] items-center gap-1.5 pl-[11px] text-[17px] text-[#8c8c8c]">
          <RhinoLogo className="h-6 w-6" />
          無題 - Rhinoceros 5.0 Educational Lab License
        </h1>
        <WindowButtons />
      </header>
      <nav className="flex h-[27px] items-center gap-4 bg-white pl-2 text-[17px] text-[#6a6a6a]">
        {rhinoMenu.map((m) => (
          <button key={m} className="whitespace-nowrap">{m}</button>
        ))}
      </nav>
      <div className={"mt-1 flex h-[78px] border-l-8 border-[#e0e4ea] bg-white text-[20px] leading-[26px] text-black " + GOTHIC}>
        <div className="flex-1 whitespace-pre">
          <p>ｺﾏﾝﾄﾞ: _Line</p>
          <p>直線の始点 ( 両方向(B)  法線(N)  角度(A)  垂直(V)  4点(F)  二等分線(I)  直交(P)  接点(T)  延長(X) ):</p>
          <p>直線の終点 ( 両方向(B) ):</p>
        </div>
        <div className="flex w-[25px] flex-col bg-[#f0f0f0]">
          <button aria-label="Scroll up" className="flex h-[26px] items-center justify-center"><svg viewBox="0 0 12 8" className="h-2 w-3" fill="none" stroke="#555" strokeWidth="2"><path d="m1 7 5-6 5 6" /></svg></button>
          <span className="h-[26px] bg-[#cdcdcd]" />
          <button aria-label="Scroll down" className="flex h-[26px] items-center justify-center"><svg viewBox="0 0 12 8" className="h-2 w-3" fill="none" stroke="#555" strokeWidth="2"><path d="m1 1 5 6 5-6" /></svg></button>
        </div>
      </div>
      <div className={"flex h-[25px] border-l-8 border-t border-l-[#e0e4ea] border-t-[#9a9a9a] bg-white text-[20px] " + GOTHIC}>
        <label htmlFor="cmd" className="leading-5 text-black">ｺﾏﾝﾄﾞ:</label>
        <input id="cmd" className="min-w-0 flex-1 px-1 leading-5 outline-none" />
        <div className="flex w-6 flex-col gap-0.5 py-px">
          {["M0 5h8L4 0z", "M0 0h8L4 5z"].map((d, i) => (
            <button key={d} aria-label={i ? "Next command" : "Previous command"} className="flex flex-1 items-center justify-center border border-[#b0b0b0] bg-[#f4f4f4]">
              <svg viewBox="0 0 8 5" className="h-[5px] w-2"><path d={d} /></svg>
            </button>
          ))}
        </div>
      </div>
      <div className="mt-1 flex h-[29px] items-end border-t border-[#c3c8d0] bg-[#e0e4ea] pl-[7px] text-[18px]">
        <div role="tablist" className={"flex h-[25px] min-w-0 flex-1 overflow-hidden text-black " + GOTHIC}>
          <button role="tab" aria-selected="true" className="h-full shrink-0 whitespace-nowrap rounded-tr-md bg-white px-[15px]">標準</button>
          {rhinoTabs.map(([t, large]) => (
            <button key={t} role="tab" aria-selected="false" className={"flex h-full shrink-0 items-center whitespace-nowrap border-b border-t border-[#a9b0c0] bg-[#d3d9ea] " + (large ? "pl-[17px] text-[20px]" : "pl-[15px]")}>
              {t}
              <svg viewBox="0 0 16 25" className="h-[25px] w-4" preserveAspectRatio="none"><path d="M2 25 13 2h3" fill="none" stroke="#a9b0c0" strokeWidth="1.300" /></svg>
            </button>
          ))}
        </div>
        <button aria-label="More tabs" className="h-[25px] border-b border-l border-t border-[#a9b0c0] px-0.5 leading-[22px]">»</button>
        <button aria-label="Tab settings" className="flex h-[25px] w-[18px] items-center border-b border-t border-[#a9b0c0]">
          <svg viewBox="0 0 16 16" className="h-4 w-4" fill="none" stroke="#8d8d8d"><circle cx="8" cy="8" r="6" strokeWidth="2" strokeDasharray="2.400 1.400" /><circle cx="8" cy="8" r="2.500" /></svg>
        </button>
      </div>
      <div className="flex h-[39px] gap-1 bg-gradient-to-b from-[#f4f6fa] to-[#dde2e9] pl-2 pt-[3px]">
        {mainIcons.map(([n, g, c]) => (
          <button key={n} aria-label={n} className="h-6 w-6"><Ico>{g}{c && corner}</Ico></button>
        ))}
      </div>
      <div className="flex min-h-0 flex-1">
        <div className="w-[65px] pt-0.5">
          <div className="mb-0.5 ml-1 mr-2 h-[3px] border-y border-[#b6bcc5]" />
          <div className="grid w-14 grid-cols-2">
            {sideIcons.map(([n, g, c]) => (
              <button key={n} aria-label={n} className="flex h-7 w-7 items-center justify-center"><Ico>{g}{c && corner}</Ico></button>
            ))}
          </div>
        </div>
        <div className="flex min-w-0 flex-1 flex-col">
          <div className="grid min-h-0 flex-1 grid-cols-2 grid-rows-2 gap-[3px] bg-[#e6ebf2]">
            <Viewport name="Top" active mark={<AxisMark up="y" right="x" />}>
              <OrthoGrid ox={341} oy={356} />
              <path d="M341 0v356" stroke="#3f9a46" strokeWidth="2" />
              <path d="M341 356h2000" stroke="#a3474a" strokeWidth="2" />
              <path d="m208 224 265 308" stroke="#000" strokeWidth="1.500" />
            </Viewport>
            <Viewport
              name="Perspective"
              mark={
                <svg className="absolute bottom-[18px] left-[34px] h-14 w-14" fill="none" stroke="#70767f" strokeWidth="1.500">
                  <path d="M2 40V12M2 40l16-13M2 40l28 8" />
                  <text x="4" y="15" fontSize="14" fill="#70767f" stroke="none" fontFamily="Open Sans">z</text>
                  <text x="19" y="30" fontSize="14" fill="#70767f" stroke="none" fontFamily="Open Sans">y</text>
                  <text x="32" y="51" fontSize="14" fill="#70767f" stroke="none" fontFamily="Open Sans">x</text>
                </svg>
              }
            >
              <PerspectiveGrid />
              <path d="M341 356 684 61" stroke="#459b4b" strokeWidth="2" />
              <path d="m341 356 343 99" stroke="#a3474a" strokeWidth="2" />
              <path d="m311 302 48 132" stroke="#000" strokeWidth="1.500" />
            </Viewport>
            <Viewport name="Front" mark={<AxisMark up="z" right="x" />}>
              <OrthoGrid ox={341} oy={355} />
              <path d="M341 0v355" stroke="#3f9a46" strokeWidth="2" />
              <path d="M341 355h2000" stroke="#a3474a" strokeWidth="2" />
              <path d="M208 355h266" stroke="#000" strokeWidth="1.500" />
            </Viewport>
            <Viewport name="Right" mark={<AxisMark up="z" right="y" />}>
              <OrthoGrid ox={341} oy={355} />
              <path d="M341 0v355" stroke="#3f9a46" strokeWidth="2" />
              <path d="M341 355h2000" stroke="#a3474a" strokeWidth="2" />
              <path d="M164 355h309" stroke="#000" strokeWidth="1.500" />
            </Viewport>
          </div>
          <div role="tablist" className="flex h-7 text-[17px] text-black">
            {viewTabs.map((t) => (
              <button key={t} role="tab" aria-selected={t === "Top"} className={"flex items-center border-b border-r border-[#a9b0c0] pr-[10px] " + (t === "Top" ? "bg-white" : "bg-[#d3d9ea]")}>
                <svg viewBox="0 0 14 28" className="h-7 w-[14px]" preserveAspectRatio="none"><path d="M0 0v12l11 16H0z" fill="#e0e4ea" /><path d="m0 12 11 16" stroke="#a9b0c0" /></svg>
                {t}
              </button>
            ))}
            <button aria-label="New viewport tab" className="flex w-[48px] items-center justify-center border-r border-[#a9b0c0]">
              <svg viewBox="0 0 12 12" className="h-3 w-3" fill="#fff" stroke="#666"><path d="M4.500.5h3v4h4v3h-4v4h-3v-4h-4v-3h4z" /></svg>
            </button>
          </div>
        </div>
      </div>
      <footer className={"flex h-[26px] overflow-hidden whitespace-nowrap border-b border-t border-[#9aa2ad] text-[19px] leading-6 text-black " + GOTHIC}>
        {statusCells.map(([t, w]) => (
          <span key={t} className={w + " border-r border-[#a9b0b8] text-center"}>{t}</span>
        ))}
        <span className="flex w-[173px] items-center border-r border-[#a9b0b8] pl-[3px]"><span className="h-[19px] w-[19px] bg-black" />ﾃﾞﾌｫﾙﾄ</span>
        {statusModes.map(([t, w, on]) => (
          <button key={t} className={w + " overflow-hidden border-r border-[#a9b0b8] px-0.5 text-left " + (on ? "bg-[#e3f2fd] font-bold" : "")}>{t}</button>
        ))}
      </footer>
    </div>
  );
}

/* ---------- slider dialog ---------- */

function Digits({ value, sign, lift }: { value: string; sign?: boolean; lift?: number }) {
  const firstReal = value.search(/[1-9]|0\./);
  return (
    <span className="flex h-full items-center">
      {sign && <span>+</span>}
      {value.split("").map((c, i) =>
        c === "." ? (
          <span key={i} className="flex h-full w-2 items-end justify-center bg-[#c4c4c4] leading-3">.</span>
        ) : (
          <span key={i} className={"h-full w-[13px] border-l border-[#d6d6d6] text-center " + (i < firstReal ? "text-[#b4b4b4] " : "text-black ") + (i === lift ? "leading-3" : "leading-[26px]")}>{c}</span>
        )
      )}
    </span>
  );
}

function Field({ title, children, className }: Kids & { title: string; className: string }) {
  return (
    <fieldset className={"mx-2 rounded-[1px] border border-[#dcdcdc] px-[7px] " + className}>
      <legend className="px-0.5 leading-6">{title}</legend>
      {children}
    </fieldset>
  );
}

function NumRow({ label, value, sign, shade, lift }: { label: string; value: string; sign?: boolean; shade?: boolean; lift?: number }) {
  return (
    <div className={"flex h-7 items-center justify-between border border-black pl-[5px] " + (shade ? "bg-gradient-to-b from-[#d9d9d9] via-white to-[#d9d9d9]" : "bg-[#f0f0f0]")}>
      <span>{label}</span>
      <Digits value={value} sign={sign} lift={lift} />
    </div>
  );
}

function Ticks({ n, major }: { n: number; major: number }) {
  return (
    <span className="flex h-2 flex-1 items-end justify-between border-b border-[#8f8f8f]">
      {range(0, n - 1).map((i) => (
        <span key={i} className={"w-px bg-[#8f8f8f] " + (i % major === 0 ? "h-1.5" : "h-1")} />
      ))}
    </span>
  );
}

function SliderDialog() {
  return (
    <div role="dialog" aria-label="Slider" className={"absolute left-[611px] top-[717px] flex w-[457px] flex-col border border-[#2f86c5] bg-[#f0f0f0] pb-2 text-[17px] text-black shadow-[0_4px_16px_rgba(0,0,0,.35)] " + GOTHIC}>
      <header className={"flex h-9 items-center bg-white pl-1 text-[17px] " + UI}>
        <h2 className="flex-1">Slider:</h2>
        <button aria-label="Help" className="w-[70px] text-center text-[18px]">?</button>
        <button aria-label="Close" className="flex w-[70px] justify-center"><svg viewBox="0 0 16 16" className="h-4 w-4" stroke="#111" strokeWidth="1.300"><path d="m1 1 14 14M15 1 1 15" /></svg></button>
      </header>
      <div className="flex flex-col gap-3 pt-[5px]">
        <Field title="Properties" className="h-[124px] pr-1">
          <div className="grid grid-cols-[1fr_279px] items-center gap-y-1 pl-0.5">
            <label htmlFor="s-name" className="pt-1 leading-[22px]">Name</label>
            <input id="s-name" className="h-[26px] border border-[#7a7a7a] bg-white px-1" />
            <label htmlFor="s-expr" className="pt-1 leading-[22px]">Expression</label>
            <input id="s-expr" className="h-[26px] border border-[#7a7a7a] bg-white px-1" />
            <label htmlFor="s-grip" className="pt-1 leading-[22px]">Grip Style</label>
            <span className="relative">
              <select id="s-grip" className="block h-[26px] w-full appearance-none border border-[#adadad] bg-[#e1e1e1] pl-[3px]"><option>Shape &amp; Text</option></select>
              <svg viewBox="0 0 12 8" className="pointer-events-none absolute right-2 top-2.5 h-2 w-3" fill="none" stroke="#444"><path d="m1 1 5 5 5-5" /></svg>
            </span>
          </div>
        </Field>
        <Field title="Slider accuracy" className="h-[112px]">
          <div className="flex items-center pl-1.5 pt-1">
            <span className="w-[146px]">Rounding</span>
            <div className="flex flex-1 gap-2 font-['Liberation_Serif',serif] text-[23px] font-bold text-[#2b2b2b]">
              {["R", "N", "E", "O"].map((l) => (
                <button key={l} className={"h-[34px] w-[60px] " + (l === "R" ? "border border-[#7da2ce] bg-[#bfdaee]" : "")}>{l}</button>
              ))}
            </div>
          </div>
          <div className="mt-2 flex items-center pl-1.5">
            <label htmlFor="s-digits" className="w-[164px]">Digits</label>
            <div className="relative flex h-6 w-[229px] items-center">
              <Ticks n={7} major={6} />
              <span className="absolute left-[98px] top-px h-[21px] w-[30px] border border-black bg-white text-center leading-[18px]">3</span>
              <input id="s-digits" type="range" min="0" max="6" defaultValue="3" className="absolute inset-0 w-full opacity-0" />
            </div>
          </div>
        </Field>
        <Field title="Numeric domain" className="h-[125px]">
          <div className="flex flex-col gap-0.5 pt-1">
            <NumRow label="Min" value="000000000.000" sign />
            <NumRow label="Max" value="000000100.000" sign shade lift={8} />
            <NumRow label="Range" value="000000100.000" />
          </div>
        </Field>
        <Field title="Numeric value" className="h-[100px]">
          <div className="flex flex-col gap-0.5 pt-1">
            <NumRow label="" value="000000000.250" />
            <div className="relative flex h-[30px] items-center border border-black bg-gradient-to-b from-[#dadada] to-[#f2f2f2] pl-0.5 pr-9">
              <label htmlFor="s-val" className="h-6 w-[69px] border border-black bg-white text-center leading-[21px]">0.250</label>
              <Ticks n={19} major={5} />
              <input id="s-val" type="range" min="0" max="10" step="0.001" defaultValue="0.25" className="absolute inset-0 w-full opacity-0" />
            </div>
          </div>
        </Field>
      </div>
      <div className="mr-[10px] mt-[9px] flex justify-end gap-0.5">
        {["OK", "Cancel"].map((b) => (
          <button key={b} className="h-[31px] w-[131px] border border-[#adadad] bg-[#e1e1e1]">{b}</button>
        ))}
      </div>
    </div>
  );
}

/* ---------- canvas ---------- */

function Grip({ className }: { className: string }) {
  return <span className={"absolute h-[14px] w-[14px] rounded-full border-[3px] border-black bg-white " + className} />;
}

function Balloon({ className }: { className: string }) {
  return (
    <svg viewBox="0 0 18 18" className={"absolute h-[18px] w-[18px] " + className}>
      <path d="M2 .700h14q1.500 0 1.500 1.500v11q0 1.500-1.500 1.500h-4.500L9 17.500l-2-2.800H2Q.5 14.700.5 13.200v-11Q.5.700 2 .700z" fill="#f5bd1f" stroke="#9a6a00" />
      <path d="M2 2h14v5H2z" fill="#ffe9a0" />
    </svg>
  );
}

function Canvas() {
  return (
    <main className="relative min-h-0 flex-1 overflow-hidden bg-[#d0cdc3]">
      <div className="absolute inset-0 bg-[repeating-linear-gradient(135deg,rgba(120,118,110,.05)_0_2px,transparent_2px_7px)]" />
      <div className="absolute -bottom-12 -right-12 left-[113px] top-[203px] border-2 border-[#333] bg-[#d3cfc6] shadow-[0_0_22px_6px_rgba(0,0,0,.55)]" />
      <div className="absolute inset-0 bg-[linear-gradient(to_right,rgba(90,90,80,.27)_0_2px,transparent_2px),linear-gradient(to_bottom,rgba(90,90,80,.22)_0_2px,transparent_2px)] bg-[size:234px_100%,100%_78px] bg-[position:113px_0,0_47px]" />

      <svg className="absolute inset-0 h-full w-full" fill="none">
        <path d="M380 618c80 0 80 20 162 20" stroke="#ee6c4a" strokeWidth="4.500" />
      </svg>

      <div className={"text-black " + UI}>
        <div className="absolute left-[295px] top-[602px] flex h-[33px] w-[80px]">
          <Grip className="-left-[7px] top-[9px]" />
          <Grip className="-right-[7px] top-[9px]" />
          <div className="relative flex-1 rounded-md border-2 border-[#7a1f08] bg-gradient-to-b from-[#ffd59a] via-[#ff9f2e] to-[#fa8a12] text-center text-[23px] leading-7">Geo</div>
          <Balloon className="-top-4 right-[3px]" />
        </div>

        <div className="absolute left-[546px] top-[620px] flex h-[133px] w-[129px]">
          {["top-[12px]", "top-[43px]", "top-[74px]", "top-[106px]"].map((t) => <Grip key={t} className={"-left-[7px] " + t} />)}
          <Grip className="-right-[7px] top-[58px]" />
          <div className="relative flex flex-1 rounded-md border-2 border-[#7a1f08] bg-gradient-to-b from-[#ffcf8e] from-0% via-[#ffa02a] via-15% to-[#fc8e14] p-px text-[22px]">
            <div className="flex w-[45px] flex-col pr-[9px] text-right leading-[31px]">
              <span>C</span><span>T</span><span>L0</span><span>L1</span>
            </div>
            <div className="flex w-10 items-center justify-center rounded-[5px] border-2 border-black bg-gradient-to-b from-[#8a8a8a] from-0% via-[#444] via-12% to-[#303030]">
              <span className="-rotate-90 text-[25px] font-bold text-white">Ext</span>
            </div>
            <div className="flex flex-1 items-center justify-center pb-0.5 pr-2">C</div>
          </div>
          <Balloon className="-top-4 right-[2px]" />
        </div>

        <div className="absolute left-[187px] top-[790px] flex h-[33px] w-[277px] text-[22px] leading-[26px]">
          <Grip className="-right-[7px] top-[9px]" />
          <div className="relative flex flex-1 overflow-hidden rounded-md border-2 border-[#444] bg-gradient-to-b from-white via-[#d2d2d2] to-[#bdbdbd]">
            <div className="w-[88px] border-r-2 border-[#333] bg-gradient-to-b from-[#b5b4c4] to-[#8f8da3] text-center">Slider</div>
            <div className="flex items-center gap-2 pl-12">
              <span className="z-10 h-3 w-3 rounded-full border-[3px] border-black bg-white" />
              <span className="z-10 pb-1 text-[24px]">0.250</span>
            </div>
            <svg className="absolute left-[101px] top-2 h-2.5 w-[158px]" fill="none" stroke="#999"><path d="M1 0v8h155V0M16 4v4M32 4v4M48 4v4M110 4v4M125 4v4M140 4v4" /></svg>
          </div>
        </div>
      </div>

      <SliderDialog />

      <div className="pointer-events-none absolute left-[952px] top-[1059px] h-[78px] w-[78px] rounded-full bg-[#fbf400]/60" />
      <div className="pointer-events-none absolute left-[978px] top-[1069px] h-[38px] w-[38px] rounded-full border-[3px] border-[#f0731c]/80" />
      <svg viewBox="0 0 18 27" className="pointer-events-none absolute left-[990px] top-[1107px] h-[28px] w-[19px]"><path d="M1 1v21l5-5 4 9 4-2-4-8h7z" fill="#fff" stroke="#222" /></svg>

      <svg viewBox="0 0 46 54" className="absolute bottom-11 right-[16px] h-[54px] w-[46px]">
        <circle cx="25" cy="30" r="20" fill="#e4e4e4" stroke="#444" strokeWidth="1.500" />
        <circle cx="25" cy="30" r="17" fill="#d2d2d2" stroke="#fff" strokeWidth="3" strokeDasharray="18 8.700" />
        <path d="m1 2 8 1-1 3 3 5-4 1-2-4-3 1z" />
      </svg>

      <div className="absolute bottom-0 left-0 flex items-center gap-1 border-y-2 border-r-2 border-black bg-gradient-to-b from-white to-[#8a8a8a] pl-[3px] pr-2">
        {downArrowTile}
        {sketchTile}
        <Ico><rect x="4" y="4" width="16" height="17" rx="2" fill="#fff" stroke="#444" /><path d="M12 8v9M7.500 12.500h9" strokeWidth="2.200" /></Ico>
        <Ico><path d="m3 2 11 11M13 2 3 13" stroke="#d21" strokeWidth="4" /><circle cx="4" cy="19" r="2" fill="#fff" /><circle cx="18" cy="5" r="2" fill="#fff" /><circle cx="15" cy="18" r="5" fill="#fff" stroke="#a22" /><path d="m13 20 3-5 2 3" /></Ico>
        {eyeHex}
      </div>
    </main>
  );
}

/* ---------- Grasshopper window ---------- */

const ghTabs = ["Maths", "Sets", "Vector", "Curve", "Surface", "Mesh", "Intersect", "Transform", "Display", "Wb", "Kangaroo2", "Kangaroo", "LunchBox", "LMNts"];

function Caret() {
  return <svg viewBox="0 0 6 4" className="h-1 w-1.5"><path d="M0 0h6L3 4z" /></svg>;
}

function GrasshopperWindow() {
  return (
    <div className={"flex min-w-0 flex-1 flex-col border-x-2 border-t border-[#333] bg-[#f0f0f0] " + UI}>
      <header className="flex h-11 items-start justify-between bg-white">
        <h1 className="flex h-[46px] items-center pl-[10px] text-[17px] text-[#8c8c8c]">Grasshopper - unnamed</h1>
        <WindowButtons />
      </header>
      <nav className="flex h-[29px] items-center gap-[22px] bg-gradient-to-r from-[#f0f0f0] to-white pl-5 pr-[10px] text-[16px] text-black">
        {["File", "Edit", "View", "Display", "Solution", "Help"].map((m) => <button key={m}>{m}</button>)}
        <span className="flex-1 text-right">unnamed</span>
      </nav>
      <div role="tablist" className={"flex h-6 items-stretch text-[17px] leading-[22px] text-[#666] " + GOTHIC}>
        <button role="tab" aria-selected="true" className="rounded-t-lg border-x border-t border-[#aaa] bg-white px-[9px] leading-5 text-black">Params</button>
        <div className="flex flex-1 gap-[19px] border-b border-[#aaa] pl-[10px]">
          {ghTabs.map((t) => <button key={t} role="tab" aria-selected="false">{t}</button>)}
        </div>
      </div>
      <div className="flex h-[71px] gap-1 rounded-tr-lg bg-gradient-to-b from-[#d0d0d0] to-[#f2f2f2] pl-0.5 pt-[3px]">
        {ribbon.map((p) => (
          <section key={p.title} aria-label={p.title} className="flex h-[63px] flex-col overflow-hidden rounded-t-md border border-b-0 border-[#8f8f8f] bg-gradient-to-b from-[#d4d4d4] to-[#f4f4f4]">
            <div className="flex h-[57px] px-px">
              {p.groups.map((g, gi) => (
                <React.Fragment key={gi}>
                  {gi > 0 && <span className="mx-1 my-2 w-0.5 border-l border-[#aaa] bg-white" />}
                  <div className="grid grid-flow-col grid-rows-2">
                    {g.map((ic, i) => (
                      <button key={i} aria-label={`${p.title} ${gi + 1}-${i + 1}`} className="flex h-[28px] w-7 items-center justify-center">{ic}</button>
                    ))}
                  </div>
                </React.Fragment>
              ))}
            </div>
            <div className="h-[5px] overflow-hidden bg-[#1c1c1c] text-center text-[14px] leading-[14px] text-white">{p.title}</div>
          </section>
        ))}
      </div>
      <div className="flex h-[39px] items-center border-t-2 border-[#777] bg-gradient-to-b from-white to-[#f4f4f4] pl-[5px] pr-1">
        <button aria-label="Open" className="mr-1.5"><Ico><path d="M5 12V2h8l4 4v6" fill="#fff" stroke="#555" /><path d="M3 22V10h5l2 3h11l-2 9z" fill="#62c43a" stroke="#2c7a12" /></Ico></button>
        <button aria-label="Save"><Ico><path d="M1 2h22v20H4l-3-3z" fill="#2b6fd6" stroke="#123b86" /><path d="M5 2h14v10H5z" fill="#e4ecf6" stroke="none" /><path d="M6 15h11v7H6z" fill="#8fa3c0" /><path d="M8 17h3v5H8z" fill="#123" /></Ico></button>
        <span className="mx-1.5 h-[26px] w-px bg-[#c4c4c4]" />
        <span className="relative">
          <select aria-label="Zoom" className="block h-[35px] w-[114px] appearance-none border border-[#8a8a8a] bg-white pl-[3px] text-[20px] text-black"><option>156%</option></select>
          <svg viewBox="0 0 12 8" className="pointer-events-none absolute right-[7px] top-[13px] h-2 w-3" fill="none" stroke="#444"><path d="m1 1 5 6 5-6" /></svg>
        </span>
        <div className="flex flex-1 items-center gap-1 pl-[3px]">
          <button aria-label="Zoom extents" className="flex items-center gap-1.5"><Ico><path d="M3 8V3h5M16 3h5v5M21 16v5h-5M8 21H3v-5M3 11v2M21 11v2M11 3h2M11 21h2" strokeWidth="3" /><path d="m10 10 4 4M14 10l-4 4" strokeWidth="2" /></Ico><Caret /></button>
          <button aria-label="Views" className="flex items-center gap-1.5"><Ico><path d="M1 12c6-9 16-9 22 0-6 8-16 8-22 0z" fill="#cfe6f2" stroke="#234" /><circle cx="12" cy="12" r="5.500" fill="#3a9bd0" stroke="#145" /><circle cx="12" cy="12" r="2" fill="#000" /></Ico><Caret /></button>
          <button aria-label="Sketch"><Ico><path d="m10 18 2-7 9-9 2 7-7 10z" fill="#e6402a" stroke="#7c1208" /><path d="m10 18 2-7 4 3 1 4-3 2z" fill="#f5c46c" stroke="none" /><path d="M2 6c4 0 5 3 3 7s0 10 7 7" strokeWidth="1.800" /></Ico></button>
        </div>
        <div className="flex items-center">
          <button aria-label="No preview" className="px-0.5"><Ico><path d="m5 9 5-6 8 2-3 9-8 1z" fill="#ddd" stroke="#777" /><ellipse cx="12" cy="17" rx="8" ry="5" fill="#333" /></Ico></button>
          <button aria-label="Wireframe preview" className="px-0.5"><Ico><path d="m2 14 8-11 10-1 3 7-9 12-9 2z" fill="#eee" stroke="#333" /><ellipse cx="8" cy="17" rx="4" ry="5" /><ellipse cx="17" cy="8" rx="3.500" ry="5" /></Ico></button>
          <button aria-label="Shaded preview" className="border border-[#3c8fd0] bg-[#eaf4fc] px-0.5 py-[3px]"><Ico><path d="m2 13 6-10 12 1 3 5-7 12-9 1z" fill="#c0140e" stroke="#5c0503" /><ellipse cx="17" cy="7" rx="5" ry="4" fill="#e84a3c" stroke="#7c0c06" /></Ico></button>
          <span className="mx-[7px] h-[26px] w-px bg-[#b4b4b4]" />
          <button aria-label="Preview selected" className="px-0.5"><Ico><path d="m2 14 7-9 5 12-6 6z" fill="#ddd" stroke="#555" /><path d="m9 4 10-2 4 7-8 10z" fill="#4fae2a" stroke="#1f5c0c" /><path d="m3 2 15 20" /></Ico></button>
          <button aria-label="Document preview" className="px-0.5"><Ico><circle cx="12" cy="12" r="10" fill="#eee" stroke="#555" /><path d="M12 2a10 10 0 0 0 0 20z" fill="#f09020" stroke="#a35c10" /></Ico></button>
          <span className="mx-1 h-[26px] w-px bg-[#b4b4b4]" />
          <button aria-label="Mesh quality" className="flex items-center gap-0.5"><Ico><path d="m7 3 9-1 5 6v8l-6 6H8l-5-6V8z" fill="#6fb0ec" stroke="#1c4c88" /><circle cx="9.500" cy="8" r="3" fill="#dff0ff" stroke="none" /></Ico><Caret /></button>
        </div>
      </div>
      <Canvas />
      <footer className={"flex h-[28px] items-center justify-between border-b border-t-2 border-b-[#555] border-t-white bg-gradient-to-r from-[#f0f0f0] to-white pl-2 pr-[26px] text-[16px] " + GOTHIC}>
        <span className="text-black">...</span>
        <span className="text-[#777]">0.9.0076</span>
      </footer>
    </div>
  );
}

/* ---------- taskbar ---------- */

function TaskItem({ name, running, active, children }: Kids & { name: string; running?: boolean; active?: boolean }) {
  return (
    <button aria-label={name} className={"relative flex h-full w-[75px] items-center justify-center " + (active ? "bg-[#333538]" : "")}>
      <svg viewBox="0 0 34 34" className="h-[34px] w-[34px]" fill="none">{children}</svg>
      {running && <span className={"absolute bottom-0 h-[3px] bg-[#76b9ed] " + (active ? "inset-x-0" : "inset-x-[7px]")} />}
    </button>
  );
}

function Tray({ name, children }: Kids & { name: string }) {
  return (
    <button aria-label={name}>
      <svg viewBox="0 0 24 24" className="h-[26px] w-[26px]" fill="none" stroke="#fff" strokeWidth="1.500">{children}</svg>
    </button>
  );
}

function Taskbar() {
  return (
    <footer className={"flex h-[60px] items-center bg-[#020307] text-white " + UI}>
      <button aria-label="Start" className="flex w-[72px] justify-center"><svg viewBox="0 0 24 24" className="h-6 w-6" fill="#fff"><path d="m0 3 11-1.500V11.500H0zM12 1.300 24 0v11.500H12zM0 12.500h11v10L0 21zM12 12.500h12V24l-12-1.600z" /></svg></button>
      <div className="flex h-full w-[516px] items-center gap-[11px] bg-[#333] pl-[14px]">
        <span className="h-8 w-8 rounded-full border-4 border-white" />
        <input aria-label="Search" placeholder="Cortanaに何か聞いてみてください。" className="flex-1 bg-transparent text-[18px] outline-none placeholder:text-[#9b9b9b]" />
      </div>
      <button aria-label="Task view" className="flex w-[74px] justify-center"><svg viewBox="0 0 32 22" className="h-[22px] w-8" fill="none" stroke="#fff" strokeWidth="1.500"><path d="M8 1h16v20H8zM5 4H1v14h4M27 4h4v14h-4" /></svg></button>
      <TaskItem name="Explorer" running><path d="M2 4h10l3 3h16v23H2z" fill="#f4cf6c" /><path d="M2 10h29v20H2z" fill="#fbe08a" /><path d="M7 31V19h20v12h-5v-7H12v7z" fill="#2ba4e0" /></TaskItem>
      <TaskItem name="Chrome"><circle cx="17" cy="17" r="16" fill="#fdd23b" /><path d="M17 17 3.500 8.500A16 16 0 0 1 31 9H17z" fill="#dd4b3e" /><path d="M3.200 9A16 16 0 0 0 16 33l6-12-5-4z" fill="#1e9e58" /><circle cx="17" cy="17" r="7.500" fill="#fff" /><circle cx="17" cy="17" r="6" fill="#3f83f0" /></TaskItem>
      <TaskItem name="Notepad" running><path d="m9 5 20-2 3 26-8 3z" fill="#c9b486" /><path d="M9 4h19l-5 26-20-2z" fill="#8fcbe0" /><path d="m8 8 19 1-2 10-20-1z" fill="#b8e2ee" /><path d="m5 23 19 1" stroke="#4b8ca6" /><path d="M10 2v4M14 2v4M18 2v4M22 2v4M26 2v4" stroke="#ddd" strokeWidth="1.500" /></TaskItem>
      <TaskItem name="Command prompt"><path d="M1 4h32v26H1z" fill="#111" stroke="#ccc" strokeWidth="1.500" /><path d="M1 4h32v3H1z" fill="#ddd" /><text x="4" y="14" fontSize="6" fill="#ddd" fontFamily="Liberation Mono">C:\_</text></TaskItem>
      <TaskItem name="Excel" running><path d="M3 1h28v32H3z" fill="#e9f5e4" /><path d="M7 1h24v14L3 24V5z" fill="#86c774" /><path d="m7 5 11 19M19 5 6 24" stroke="#1c7a32" strokeWidth="4" /><path d="m18 20 14-2v13H14z" fill="#fff" /><path d="m17 24 14-2M16 28l15-1M22 20l-2 11M27 19l-1 12" stroke="#5a9f4c" /></TaskItem>
      <TaskItem name="Rhinoceros" running active><path d="M0 0h34v34H0z" fill="#181818" /><path d="M1 1h10l6 11 6 1 10-6v4l-8 5 3 7 1 10-9-4-8-4C5 20 1 12 1 1z" fill="#e8e8e8" /><path d="m6 4 6 11 7 3-2 5 6 4" stroke="#444" strokeWidth="1.500" /><circle cx="15" cy="19" r="1.500" fill="#c22" /></TaskItem>
      <TaskItem name="Recorder" running><circle cx="17" cy="17" r="16.500" fill="#fff600" /></TaskItem>
      <div className="ml-auto flex items-center gap-[10px] pr-[6px]">
        <Tray name="Hidden icons"><path d="m4 17 8-9 8 9" /></Tray>
        <Tray name="Battery"><path d="M8 8h15v10H8z" fill="#fff" /><path d="M2 6v5h5V6M3 6V3M6 6V3M4.500 11v6H8" /></Tray>
        <Tray name="Wi-Fi"><path d="M4 21C4 11 11 4 21 4M8 21c0-7 6-13 13-13M12 21c0-5 4-9 9-9M16 21c0-3 2-5 5-5" /><path d="M18 19h3v3h-3z" fill="#fff" /></Tray>
        <Tray name="Volume"><path d="M2 9h4l6-5v16l-6-5H2z" /><path d="M15 9c2 2 2 4 0 6M18 6c4 4 4 8 0 12" stroke="#999" /></Tray>
        <Tray name="Notifications"><path d="M2 3h20v15h-8l-3 4-1-4H2zM6 7h12M6 10.500h12M6 14h8" /></Tray>
        <button aria-label="Input mode" className="w-6 text-center font-['Liberation_Serif',serif] text-[22px] font-bold">A</button>
        <button aria-label="Updater" className="ml-2"><svg viewBox="0 0 24 24" className="h-6 w-6"><circle cx="11" cy="11" r="10" fill="#1673d8" /><path d="M16 14c4-2 7 0 7 4l-4 4z" fill="#d93025" /><path d="m14 19 5-2v6h-4z" fill="#fbbc05" /></svg></button>
        <div className="ml-5 w-[100px] text-center text-[16px] leading-[27px]"><p>19:31</p><p>2016/08/07</p></div>
        <span className="h-[60px] w-px bg-[#555]" />
      </div>
    </footer>
  );
}

export default function App() {
  return (
    <div className="flex h-screen flex-col overflow-hidden bg-black">
      <div className="flex min-h-0 flex-1">
        <RhinoWindow />
        <GrasshopperWindow />
      </div>
      <Taskbar />
    </div>
  );
}
